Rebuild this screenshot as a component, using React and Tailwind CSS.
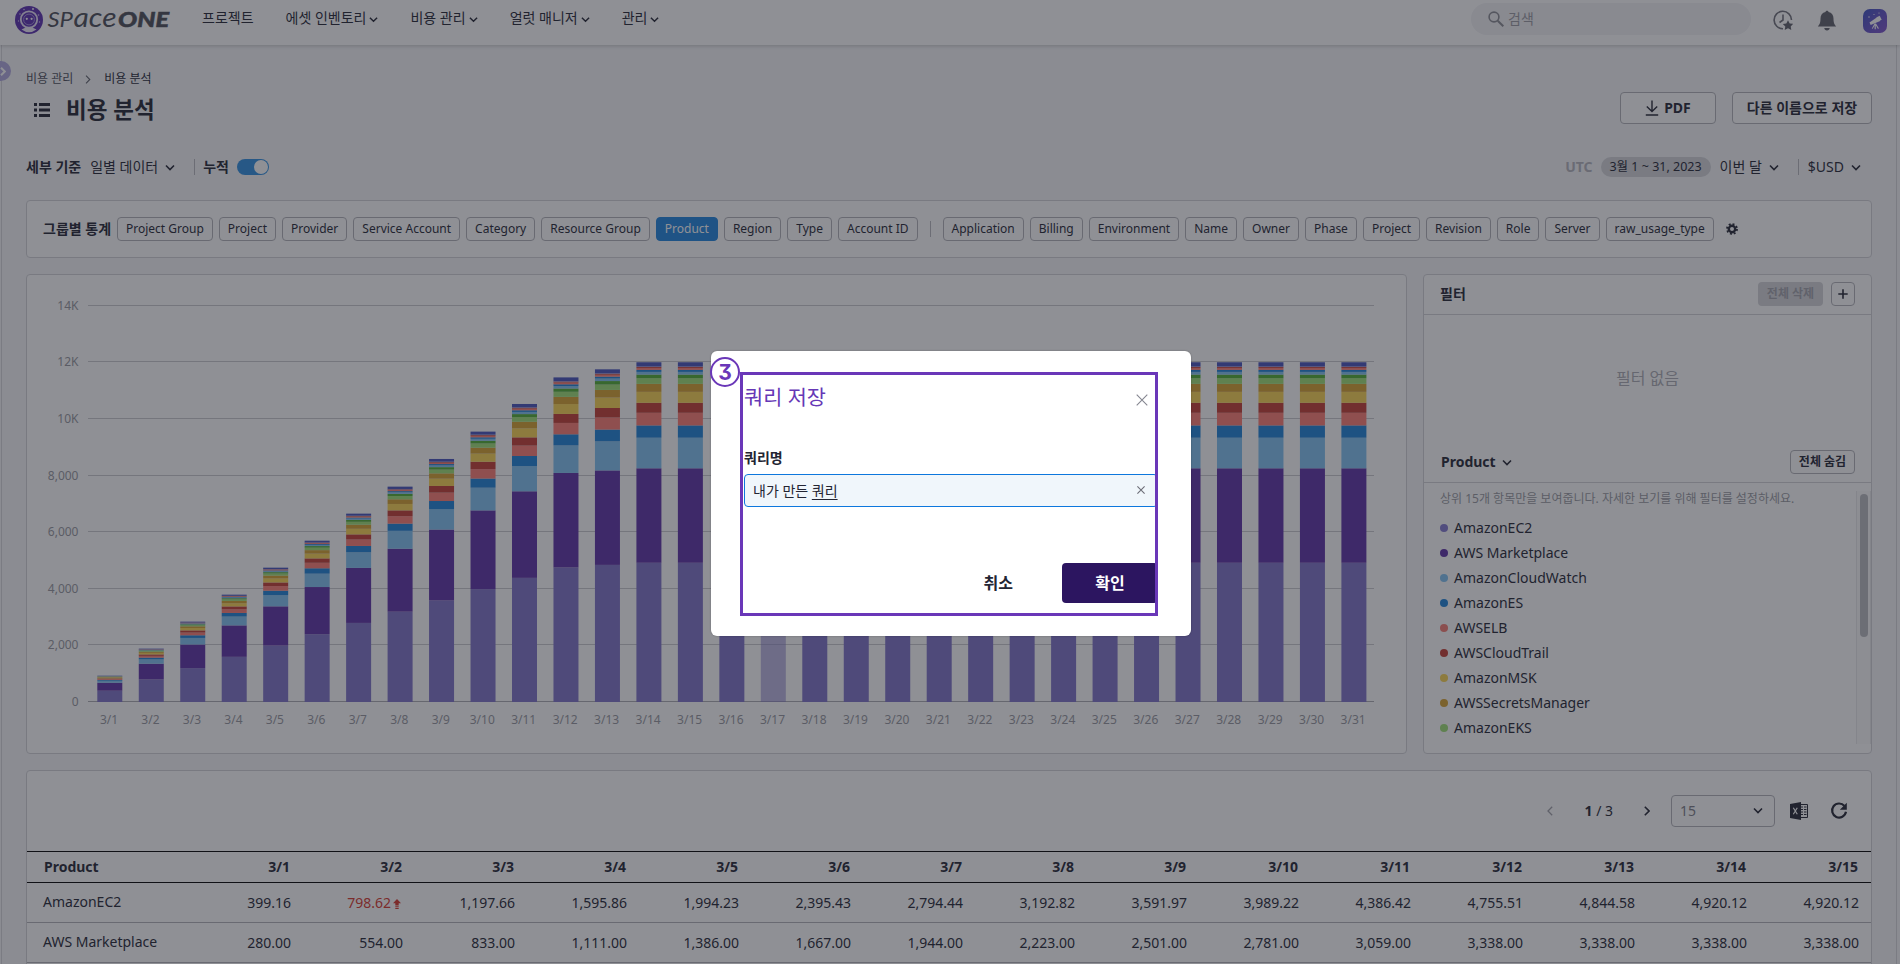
import React from "react";
import clsx from "clsx";

const menus = [
  { label: "프로젝트", left: "ml-[34px]", arrow: false },
  { label: "에셋 인벤토리", left: "ml-[32px]", arrow: true },
  { label: "비용 관리", left: "ml-[32px]", arrow: true },
  { label: "얼럿 매니저", left: "ml-[32px]", arrow: true },
  { label: "관리", left: "ml-[32px]", arrow: true },
];

const groupTags = [
  "Project Group",
  "Project",
  "Provider",
  "Service Account",
  "Category",
  "Resource Group",
  "Product",
  "Region",
  "Type",
  "Account ID",
];

const moreTags = [
  "Application",
  "Billing",
  "Environment",
  "Name",
  "Owner",
  "Phase",
  "Project",
  "Revision",
  "Role",
  "Server",
  "raw_usage_type",
];

const legends = [
  { name: "AmazonEC2", color: "bg-[#8378d0]" },
  { name: "AWS Marketplace", color: "bg-[#5c30a6]" },
  { name: "AmazonCloudWatch", color: "bg-[#80c2f2]" },
  { name: "AmazonES", color: "bg-[#1c82d8]" },
  { name: "AWSELB", color: "bg-[#f77c72]" },
  { name: "AWSCloudTrail", color: "bg-[#c43c32]" },
  { name: "AmazonMSK", color: "bg-[#fad450]" },
  { name: "AWSSecretsManager", color: "bg-[#d6a22e]" },
  { name: "AmazonEKS", color: "bg-[#9ee074]" },
];

const ec2 = [
  399.16, 798.62, 1197.66, 1595.86, 1994.23, 2395.43, 2794.44, 3192.82,
  3591.97, 3989.22, 4386.42, 4755.51, 4844.58, 4920.12, 4920.12,
];
const marketplace = [
  280, 554, 833, 1111, 1386, 1667, 1944, 2223, 2501, 2781, 3059, 3338, 3338,
  3338, 3338,
];
const totals = [
  930, 1885, 2839, 3793, 4747, 5700, 6656, 7610, 8588, 9554, 10531, 11470,
  11755, 12005, 12005,
];

// share of everything above the two biggest products, bottom to top
const restShares = [
  { color: "#80c2f2", share: 92 },
  { color: "#1c82d8", share: 37 },
  { color: "#ff7c72", share: 38 },
  { color: "#c43c32", share: 30 },
  { color: "#fad450", share: 33 },
  { color: "#d6a22e", share: 24 },
  { color: "#9ee074", share: 17 },
  { color: "#50ae32", share: 11 },
  { color: "#80c2f2", share: 8 },
  { color: "#1c82d8", share: 6 },
  { color: "#ff7c72", share: 6 },
  { color: "#c43c32", share: 3 },
  { color: "#8378d0", share: 2 },
  { color: "#4652bc", share: 12 },
];
const shareSum = restShares.reduce((sum, r) => sum + r.share, 0);

const yLabels = ["0", "2,000", "4,000", "6,000", "8,000", "10K", "12K", "14K"];

const money = (value) =>
  value.toLocaleString("en-US", {
    minimumFractionDigits: 2,
    maximumFractionDigits: 2,
  });

const Chevron = ({ className }) => (
  <svg
    viewBox="0 0 10 7"
    className={className}
    fill="none"
    stroke="currentColor"
    strokeWidth="1.6"
  >
    <path d="M1 1.5 L5 5.5 L9 1.5" />
  </svg>
);

const Logo = () => (
  <svg width="160" height="36" viewBox="0 -4 160 36" className="ml-[13px] overflow-visible">
    <circle cx="16" cy="16" r="14" fill="#5a2fb0" />
    <circle cx="16" cy="15.5" r="8.2" fill="none" stroke="#e6e0f5" strokeWidth="1.8" />
    <circle cx="16" cy="15.5" r="5.4" fill="#5a2fb0" stroke="#a48fdc" strokeWidth="1" />
    <circle cx="13.8" cy="14.8" r="1.1" fill="#fff" />
    <circle cx="18.6" cy="14.8" r="1.1" fill="#fff" />
    <path d="M8.5 25.5 q7.5 -4.5 15 0 q-7.5 5.5 -15 0z" fill="#efeaf9" />
    <circle cx="7" cy="10" r="0.8" fill="#c9bcec" />
    <circle cx="11" cy="5.5" r="0.8" fill="#c9bcec" />
    <circle cx="20" cy="5" r="0.9" fill="#fff" />
    <circle cx="25.5" cy="11" r="0.8" fill="#c9bcec" />
    <circle cx="5.5" cy="17" r="0.7" fill="#c9bcec" />
    <circle cx="26.5" cy="18" r="0.7" fill="#c9bcec" />
    <g fill="#4a4d57" fontFamily="Lato" fontStyle="italic">
      <text x="34.5" y="23" fontSize="20.5" textLength="25.5" lengthAdjust="spacingAndGlyphs">
        SP
      </text>
      <text x="60.5" y="23" fontSize="26.5" textLength="43" lengthAdjust="spacingAndGlyphs">
        ace
      </text>
      <text
        x="105"
        y="23"
        fontSize="20.5"
        fontWeight="900"
        stroke="#4a4d57"
        strokeWidth="0.5"
        textLength="51"
        lengthAdjust="spacingAndGlyphs"
      >
        ONE
      </text>
    </g>
  </svg>
);

const Header = () => (
  <header className="relative z-10 flex h-[45px] shrink-0 items-start bg-white shadow-[0_1px_4px_rgba(0,0,0,0.2)]">
    <Logo />
    <nav className="-ml-[5px] flex h-9 items-center text-[14px] leading-5">
      {menus.map((menu) => (
        <div key={menu.label} className={clsx("flex items-center", menu.left)}>
          <span>{menu.label}</span>
          {menu.arrow && <Chevron className="mt-[3px] ml-[3px] h-[7px] w-[9px]" />}
        </div>
      ))}
    </nav>
    <div className="mt-[3px] ml-auto flex h-8 w-[280px] items-center rounded-full bg-[#f2f2f5] pb-px pl-[17px] text-[14px] text-[#9a9ba2]">
      <svg viewBox="0 0 16 16" className="mr-1 h-4 w-4" fill="none" stroke="#8a8b92" strokeWidth="1.6">
        <circle cx="6" cy="6" r="4.9" />
        <path d="M9.7 9.7 L15.3 15.3" strokeWidth="2" />
      </svg>
      검색
    </div>
    <svg viewBox="0 0 20 21" className="mt-[10px] ml-[22px] h-[21px] w-5" fill="none" stroke="#70717a" strokeWidth="1.6">
      <path d="M18.5 10 A8.700 8.700 0 1 0 10 18.700" />
      <path d="M10 4.500 V10 L6.500 12.500" />
      <path
        d="M15 10.200 l1.700 3.200 3.500 .5 -2.500 2.500 .6 3.600 -3.300 -1.700 -3.300 1.700 .6 -3.600 -2.500 -2.500 3.500 -.5z"
        fill="#5d5e68"
        stroke="none"
      />
    </svg>
    <svg viewBox="0 0 20 21" className="mt-[10px] ml-6 h-[21px] w-5" fill="#5f606a">
      <path d="M10 .8 c1 0 1.500 .6 1.500 1.300 C14.800 2.800 16.500 5.300 16.500 8.500 c0 4.500 1 6 2.700 8 H.8 C2.500 14.500 3.500 13 3.500 8.500 c0 -3.200 1.700 -5.700 5 -6.400 C8.500 1.400 9 .8 10 .8z" />
      <path d="M7.300 18 h5.400 c0 1.500 -1.200 2.400 -2.700 2.400 s-2.700 -.9 -2.700 -2.400z" />
    </svg>
    <div className="mt-[9px] mr-[13px] ml-[26px] h-6 w-6 rounded-[7px] bg-linear-to-br from-[#3a52c4] to-[#8052cc]">
      <svg viewBox="0 0 24 24" className="h-6 w-6" fill="#fff">
        <path d="M6.500 13.500 l1.200 2.500 9.500 -4 -2 -4.500z" />
        <path d="M13.500 8.500 l3.200 -1.700 2 4 -3.300 1.400z" />
        <path d="M11.500 14.500 l1.500 0 3 5 -1.200 .3 -2 -3.500 v4 h-1.200 v-4 l-1.800 3.500 -1 -.4z" />
        <circle cx="6" cy="8" r="0.7" />
        <circle cx="11" cy="5.5" r="0.6" />
        <circle cx="16" cy="4" r="0.6" />
      </svg>
    </div>
  </header>
);

const TitleBar = () => (
  <>
    <div className="flex h-[18px] items-center text-[12px] leading-[18px]">
      <span className="text-[#4a4c58]">비용 관리</span>
      <svg viewBox="0 0 6 10" className="mr-[13px] ml-3 h-[9px] w-[6px]" fill="none" stroke="#60616b" strokeWidth="1.2">
        <path d="M.8 .8 L5 5 L.8 9.200" />
      </svg>
      <span>비용 분석</span>
    </div>
    <div className="mt-[5px] flex h-8 items-center">
      <svg viewBox="0 0 16 14" className="mt-px ml-2 h-[14px] w-4" fill="#232533">
        <path d="M0 0h3v3H0z M5 0h11v3H5z M0 5.500h3v3H0z M5 5.500h11v3H5z M0 11h3v3H0z M5 11h11v3H5z" />
      </svg>
      <h1 className="mt-[2px] ml-4 text-[22.5px] leading-8 font-bold">비용 분석</h1>
      <button className="-mt-[2px] ml-auto flex h-8 w-24 items-center justify-center rounded border border-[#b2b3b9] bg-white pb-[2px] text-[14px] font-bold">
        <svg viewBox="0 0 14 16" className="mt-[2px] mr-[5px] h-4 w-[14px]" fill="none" stroke="#232533" strokeWidth="1.4">
          <path d="M7 .5 V11 M1.800 6.500 L7 11.500 L12.200 6.500 M.8 15 H13.200" />
        </svg>
        PDF
      </button>
      <button className="-mt-[2px] ml-4 h-8 w-[140px] rounded border border-[#b2b3b9] bg-white pb-[2px] text-[14px] font-bold">
        다른 이름으로 저장
      </button>
    </div>
    <div className="mt-8 flex h-5 items-center text-[14px] leading-5">
      <span className="mb-px font-bold">세부 기준</span>
      <span className="ml-[9px]">일별 데이터</span>
      <Chevron className="ml-[7px] h-[7px] w-[10px]" />
      <span className="mr-2 ml-[19px] h-4 w-px bg-[#b8b9be]" />
      <span className="mb-px font-bold">누적</span>
      <span className="ml-2 flex h-4 w-8 items-center justify-end rounded-full bg-[#2f8fe0] px-px">
        <span className="h-[14px] w-[14px] rounded-full bg-white" />
      </span>
      <span className="ml-auto font-bold text-[#b4b5bd]">UTC</span>
      <span className="ml-2 h-5 w-[110px] rounded-full bg-[#d4d5d9] text-center text-[12.5px] leading-[19px]">
        3월 1 ~ 31, 2023
      </span>
      <span className="ml-[9px]">이번 달</span>
      <Chevron className="ml-[7px] h-[7px] w-[10px]" />
      <span className="mr-[9px] ml-[19px] h-4 w-px bg-[#b8b9be]" />
      <span>$USD</span>
      <Chevron className="mr-[11px] ml-[7px] h-[7px] w-[10px]" />
    </div>
  </>
);

const Tag = ({ label, active }) => (
  <span
    className={clsx(
      "h-6 rounded border px-2 text-[12px] leading-[21px] whitespace-nowrap",
      active
        ? "border-[#1e84de] bg-[#1e84de] text-white"
        : "border-[#b2b3b9] bg-white"
    )}
  >
    {label}
  </span>
);

const GroupBy = () => (
  <section className="mt-[23px] flex h-[58px] items-center rounded border border-[#d2d3d7] bg-white pl-4">
    <span className="mr-[6px] mb-px w-[68px] text-[14px] font-bold whitespace-nowrap">
      그룹별 통계
    </span>
    <div className="flex items-center gap-[6px]">
      {groupTags.map((tag) => (
        <Tag key={tag} label={tag} active={tag === "Product"} />
      ))}
      <span className="mx-[6px] h-4 w-px bg-[#b8b9be]" />
      {moreTags.map((tag) => (
        <Tag key={tag} label={tag} />
      ))}
    </div>
    <svg viewBox="0 0 12 12" className="ml-3 h-3 w-3" fill="none" stroke="#232533">
      <circle cx="6" cy="6" r="3.2" strokeWidth="2.4" />
      <circle cx="6" cy="6" r="5" strokeWidth="1.8" strokeDasharray="1.96 1.96" />
    </svg>
  </section>
);

const Bar = ({ day }) => {
  const i = Math.min(day, 15) - 1;
  const rest = totals[i] - ec2[i] - marketplace[i];
  const parts = [
    { color: "#7e72c8", value: ec2[i] },
    { color: "#5c30a6", value: marketplace[i] },
    ...restShares.map((r) => ({
      color: r.color,
      value: (rest * r.share) / shareSum,
    })),
  ];
  let y = 427;
  return (
    <g opacity={day === 17 ? 0.5 : 1}>
      {parts.map((part, index) => {
        const height = (part.value * 56.6) / 2000;
        y -= height;
        return (
          <rect
            key={index}
            x={70.3 + (day - 1) * 41.47}
            y={y}
            width="25"
            height={height}
            fill={part.color}
          />
        );
      })}
    </g>
  );
};

const Chart = () => (
  <section className="h-[480px] w-[1381px] rounded border border-[#d2d3d7] bg-white">
    <svg width="1379" height="478" viewBox="0 0 1379 478" fontFamily="Noto Sans" fontSize="12" fill="#96979e">
      {yLabels.map((label, i) => (
        <g key={label}>
          <path
            d={`M61 ${Math.round(427 - i * 56.6) - 0.5} H1347`}
            stroke={i === 0 ? "#acadb3" : "#cacbcf"}
          />
          <text x="51.5" y={431 - i * 56.6} textAnchor="end">
            {label}
          </text>
        </g>
      ))}
      {Array.from({ length: 31 }, (_, i) => (
        <g key={i}>
          <Bar day={i + 1} />
          <text x={82 + i * 41.47} y="449" textAnchor="middle">
            3/{i + 1}
          </text>
        </g>
      ))}
    </svg>
  </section>
);

const FilterPanel = () => (
  <section className="flex h-[480px] w-[449px] flex-col rounded border border-[#d2d3d7] bg-white">
    <div className="flex h-10 shrink-0 items-center border-b border-[#d2d3d7] px-4 pb-px">
      <span className="mr-auto mb-[2px] text-[14px] font-bold">필터</span>
      <span className="h-6 w-[65px] rounded bg-[#d4d5d9] text-center text-[12px] leading-[23px] font-bold text-[#a2a3ab]">
        전체 삭제
      </span>
      <span className="ml-2 flex h-6 w-6 items-center justify-center rounded border border-[#b2b3b9]">
        <svg viewBox="0 0 10 10" className="h-[10px] w-[10px]" stroke="#232533" strokeWidth="1.6">
          <path d="M5 .3 V9.700 M.3 5 H9.700" />
        </svg>
      </span>
    </div>
    <div className="flex h-[128px] shrink-0 items-center justify-center pb-[2px] text-[16px] text-[#acadb4]">
      필터 없음
    </div>
    <div className="flex h-10 shrink-0 items-center border-b border-[#d2d3d7] px-4 pb-px">
      <span className="mb-[2px] ml-px text-[14px] font-bold">Product</span>
      <Chevron className="mr-auto ml-[6px] h-[7px] w-[10px]" />
      <span className="h-6 w-[65px] rounded border border-[#b2b3b9] text-center text-[12px] leading-[21px] font-bold">
        전체 숨김
      </span>
    </div>
    <div className="mt-2 flex h-[253px]">
      <div className="flex-1 pl-4">
        <p className="mb-2 text-[12px] leading-4 text-[#989aa1]">
          상위 15개 항목만을 보여줍니다. 자세한 보기를 위해 필터를 설정하세요.
        </p>
        {legends.map((item) => (
          <div key={item.name} className="flex h-[25px] items-center text-[14px]">
            <span className={clsx("mr-[6px] h-2 w-2 rounded-full", item.color)} />
            {item.name}
          </div>
        ))}
      </div>
      <div className="w-[15px] border-x border-[#e8e8eb] bg-[#fafafa] px-[3px] pt-[3px]">
        <div className="h-[143px] w-2 rounded-full bg-[#b9babf]" />
      </div>
    </div>
  </section>
);

const cell = "w-28 shrink-0 pr-[14px] text-right";

const DataTable = () => (
  <section className="mt-4 h-[220px] overflow-hidden rounded-t border border-[#d2d3d7] bg-white text-[14px]">
    <div className="flex h-20 items-center justify-end pr-[23px] pb-px">
      <svg viewBox="0 0 6 10" className="mr-[31px] h-[10px] w-[6px]" fill="none" stroke="#a0a1a8" strokeWidth="1.3">
        <path d="M5.200 .8 L1 5 L5.200 9.200" />
      </svg>
      <span>
        <b>1</b> / 3
      </span>
      <svg viewBox="0 0 6 10" className="ml-[31px] h-[10px] w-[6px]" fill="none" stroke="#232533" strokeWidth="1.6">
        <path d="M.8 .8 L5 5 L.8 9.200" />
      </svg>
      <div className="ml-[21px] flex h-8 w-[104px] items-center justify-between rounded border border-[#b2b3b9] pr-[11px] pl-2 text-[#7c7d86]">
        15
        <Chevron className="h-[7px] w-[10px] text-[#232533]" />
      </div>
      <svg viewBox="0 0 18 18" className="ml-[15px] h-[18px] w-[18px]">
        <path d="M10 2.500 h7.500 v13 H10z" fill="none" stroke="#232533" strokeWidth="1" />
        <path d="M11 5h2M14 5h2.500M11 7.500h2M14 7.500h2.500M11 10h2M14 10h2.500M11 12.500h2M14 12.500h2.500" stroke="#232533" />
        <path d="M0 2 L11 0 V18 L0 16z" fill="#232533" />
        <path d="M3.300 5.800 L7.300 12.200 M7.300 5.800 L3.300 12.200" stroke="#fff" strokeWidth="1.2" />
      </svg>
      <svg viewBox="0 0 18 18" className="ml-[22px] h-[18px] w-[18px]" fill="none" stroke="#232533" strokeWidth="2.2">
        <path d="M14.500 4 A7 7 0 1 0 16 9.800" />
        <path d="M16.800 .8 V7.800 H9.800z" fill="#232533" stroke="none" />
      </svg>
    </div>
    <div className="flex h-8 items-center border-y border-black pb-[2px] font-bold">
      <div className="w-[165px] shrink-0 pl-[17px]">Product</div>
      {ec2.map((_, i) => (
        <div key={i} className={cell}>
          3/{i + 1}
        </div>
      ))}
    </div>
    {[
      { name: "AmazonEC2", values: ec2 },
      { name: "AWS Marketplace", values: marketplace },
    ].map((row) => (
      <div key={row.name} className="flex h-10 items-center border-b border-[#b2b3b9]">
        <div className="w-[166px] shrink-0 pb-[2px] pl-4">{row.name}</div>
        {row.values.map((value, i) =>
          value === 798.62 ? (
            <div key={i} className="flex w-28 shrink-0 items-center justify-end pr-4 text-[#d8372c]">
              798.62
              <svg viewBox="0 0 8 10" className="mt-[3px] ml-[2px] h-[10px] w-2" fill="currentColor">
                <path d="M4 0 L8 4.300 H5.700 V6.600 H2.300 V4.300 H0z M2.300 7.200h3.400v1.100H2.300z M2.300 8.900h3.400V10H2.300z" />
              </svg>
            </div>
          ) : (
            <div key={i} className={cell}>
              {money(value)}
            </div>
          )
        )}
      </div>
    ))}
  </section>
);

const SaveQueryModal = () => (
  <div className="absolute inset-0 z-20 flex items-start justify-center bg-[#20222c]/50 pt-[351px] pl-[2px]">
    <div className="relative flex h-[285px] w-[480px] flex-col rounded-md bg-white px-8 shadow-[0_0_2px_rgba(0,0,0,0.3)]">
      <div className="mt-[29px] flex h-8 items-center justify-between pt-px pr-[11px] pl-px">
        <h2 className="text-[20.8px] leading-8 text-[#6638b6]">쿼리 저장</h2>
        <svg viewBox="0 0 12 12" className="mt-[6px] h-3 w-3" stroke="#858690" strokeWidth="1.1">
          <path d="M.7 .7 L11.300 11.300 M11.300 .7 L.7 11.300" />
        </svg>
      </div>
      <label className="mt-9 pl-px text-[14px] leading-5 font-bold">쿼리명</label>
      <div className="mt-[6px] mr-px ml-px flex h-[33px] items-center justify-between rounded border border-[#0d77dd] bg-[#f0f6fb] pr-3 pb-px pl-2 text-[14px]">
        <span>
          내가 만든 <span className="underline underline-offset-[3px]">쿼리</span>
        </span>
        <svg viewBox="0 0 8 8" className="h-2 w-2" stroke="#6c6d77" strokeWidth="1.1">
          <path d="M.4 .4 L7.600 7.600 M7.600 .4 L.4 7.600" />
        </svg>
      </div>
      <div className="mt-14 mr-px flex items-center justify-end text-[16px] font-bold">
        <button className="mr-[49px]">취소</button>
        <button className="h-10 w-24 rounded bg-[#2c1560] text-white">확인</button>
      </div>
      <div className="absolute top-[21px] left-[29px] h-[244px] w-[418px] border-3 border-[#6a37b8]" />
      <div className="absolute top-[6px] -left-px flex h-[30px] w-[30px] items-center justify-center rounded-full border-[2.5px] border-[#6a37b8] bg-white font-[Inter] text-[21px] leading-none font-bold text-[#6a37b8] [font-feature-settings:'cv09']">
        3
      </div>
    </div>
  </div>
);

const App = () => {
  return (
    <div className="relative flex h-[964px] w-[1900px] flex-col overflow-hidden bg-[#f6f7f9] font-['Noto_Sans','Noto_Sans_CJK_KR',sans-serif] text-[#232533]">
      <Header />
      <div className="relative flex-1 overflow-hidden">
        <main className="ml-px h-full w-[1896px] border-x border-[#d6d7db] pt-[25px] pr-6 pl-6">
          <TitleBar />
          <GroupBy />
          <div className="mt-4 flex gap-4">
            <Chart />
            <FilterPanel />
          </div>
          <DataTable />
        </main>
        <div className="absolute top-4 -left-[9px] flex h-5 w-5 items-center justify-end rounded-full bg-[#b0a8de] pr-[5px]">
          <svg viewBox="0 0 6 10" className="h-[9px] w-[6px]" fill="none" stroke="#fff" strokeWidth="2.2">
            <path d="M.8 .8 L5 5 L.8 9.200" />
          </svg>
        </div>
      </div>
      <SaveQueryModal />
    </div>
  );
};

export default App;
